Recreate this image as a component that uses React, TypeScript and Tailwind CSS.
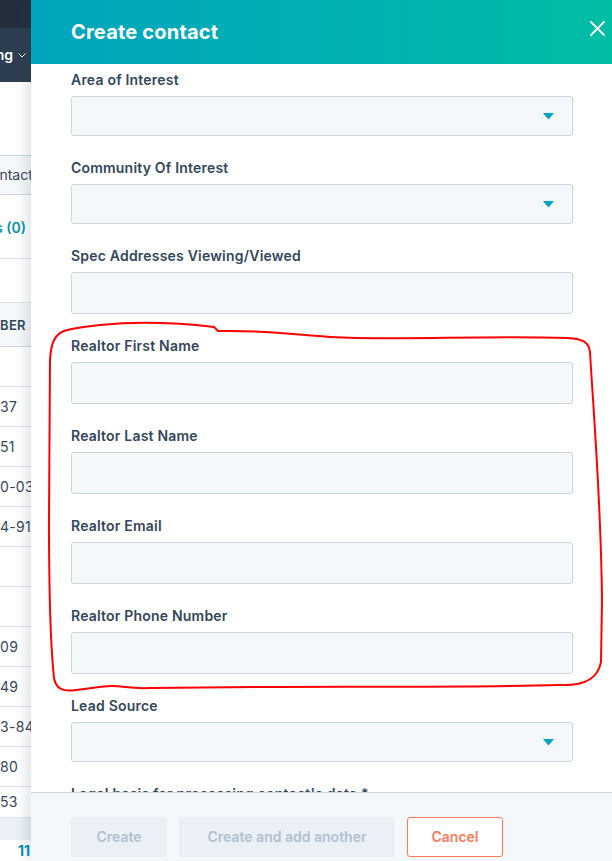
const fields = [
  { label: "Area of Interest", select: true },
  { label: "Community Of Interest", select: true },
  { label: "Spec Addresses Viewing/Viewed", select: false },
  { label: "Realtor First Name", select: false },
  { label: "Realtor Last Name", select: false },
  { label: "Realtor Email", select: false },
  { label: "Realtor Phone Number", select: false },
  { label: "Lead Source", select: true },
  { label: "Legal basis for processing contact's data *", select: true },
];

const rows = ["", "37", "51", "0-0318", "4-9164", "", "", "09", "49", "3-8402", "80"];

const Caret = () => (
  <svg width="11" height="7" viewBox="0 0 11 7">
    <path d="M0 0 L11 0 L5.5 6.5 Z" fill="#00a4bd" />
  </svg>
);

const Background = () => (
  <div className="w-[31px] h-full overflow-hidden text-[#33475b]">
    <div className="h-[28px] bg-[#232f3d]" />
    <div className="h-[54px] bg-[#2d3e50] flex items-center justify-end pr-[5px] gap-[5px]">
      <span className="text-sm font-semibold text-white whitespace-nowrap">Marketing</span>
      <svg width="8" height="5" viewBox="0 0 8 5" className="shrink-0">
        <path d="M0.5 0.5 L4 4 L7.5 0.5" fill="none" stroke="#ffffff" strokeWidth="1" />
      </svg>
    </div>
    <div className="h-[73px]" />
    <div className="h-[40px] border-y border-[#cbd6e2] bg-[#f5f8fa] flex items-center justify-end">
      <span className="text-sm whitespace-nowrap mr-[-9px]">Contacts</span>
    </div>
    <div className="h-[64px] border-b border-[#dfe3eb] flex items-center justify-end pt-[2px]">
      <span className="text-sm font-semibold text-[#0091ae] whitespace-nowrap mr-[5px]">Views (0)</span>
    </div>
    <div className="h-[44px] border-b border-[#dfe3eb]" />
    <div className="h-[44px] border-b border-[#cbd6e2] bg-[#f5f8fa] flex items-center pt-[3px]">
      <span className="text-[13px] font-semibold tracking-wide whitespace-nowrap">BER</span>
    </div>
    {rows.map((r, i) => (
      <div key={i} className="h-[40px] border-b border-[#dfe3eb] flex items-center">
        <span className="text-sm tracking-[0.3px] whitespace-nowrap">{r}</span>
      </div>
    ))}
    <div className="h-[31px] border-b border-[#dfe3eb] flex items-center">
      <span className="text-sm tracking-[0.3px] whitespace-nowrap">53</span>
    </div>
    <div className="h-[22px] bg-[#eaf0f6]" />
    <div className="h-[22px] flex items-center justify-end">
      <span className="text-sm font-bold text-[#0091ae] whitespace-nowrap mr-[1px]">11</span>
    </div>
  </div>
);

export default function App() {
  return (
    <div className="relative w-[612px] h-[861px] overflow-hidden bg-white font-['Inter',sans-serif]">
      <Background />

      <div className="absolute top-0 right-0 w-[581px] h-full flex flex-col bg-white shadow-[-6px_0_10px_rgba(45,62,80,0.12)]">
        <div className="h-16 shrink-0 bg-gradient-to-r from-[#00a4bd] to-[#00bda5] flex items-center justify-between pl-10 pr-[7px]">
          <h1 className="text-xl font-bold text-white tracking-[0.2px]">Create contact</h1>
          <svg width="15" height="15" viewBox="0 0 15 15" className="mb-[8px]">
            <path d="M1 1 L14 14 M14 1 L1 14" stroke="#ffffff" strokeWidth="1.8" strokeLinecap="round" />
          </svg>
        </div>

        <div className="flex-1 min-h-0 overflow-hidden pl-10 pr-[39px] pt-[6px]">
          {fields.map((f) => (
            <div key={f.label} className="mb-[22px]">
              <label className="block h-5 leading-5 text-sm font-semibold tracking-[0.2px] text-[#33475b] whitespace-nowrap">
                {f.label}
              </label>
              <div
                className={`mt-[6px] w-full rounded-[3px] border border-[#cbd6e2] bg-[#f5f8fa] flex items-center justify-end pr-[18px] ${
                  f.select ? "h-10" : "h-[42px]"
                }`}
              >
                {f.select && <Caret />}
              </div>
            </div>
          ))}
        </div>

        <div className="h-[69px] shrink-0 border-t border-[#cbd6e2] bg-[#f5f8fa] pl-10 pt-6 flex gap-3">
          <button className="h-10 w-24 rounded-[3px] bg-[#eaf0f6] text-sm font-semibold text-[#b0c1d4]">
            Create
          </button>
          <button className="h-10 w-[216px] rounded-[3px] bg-[#eaf0f6] text-sm font-semibold text-[#b0c1d4]">
            Create and add another
          </button>
          <button className="h-10 w-24 rounded-[3px] border border-[#ff7a59] bg-white text-sm font-semibold text-[#ff7a59]">
            Cancel
          </button>
        </div>
      </div>

      <svg className="absolute inset-0 pointer-events-none" width="612" height="861" viewBox="0 0 612 861">
        <path
          d="M64 331 C54 335 51 344 50 360 L49 520 C49 600 51 650 54 678 C56 689 63 692 76 690 C95 688 100 686 112 686 C125 686 130 689 150 688 L260 687 C360 686 460 688 560 685 C586 686 598 678 601 662 L602 600 C601 500 594 420 590 352 C589 342 583 339 568 338 C480 335 400 341 330 337 C290 334 262 330 218 331 L214 327 C180 323 140 321 100 325 C82 327 70 329 64 331 Z"
          fill="none"
          stroke="#ff0000"
          strokeWidth="2"
        />
      </svg>
    </div>
  );
}
